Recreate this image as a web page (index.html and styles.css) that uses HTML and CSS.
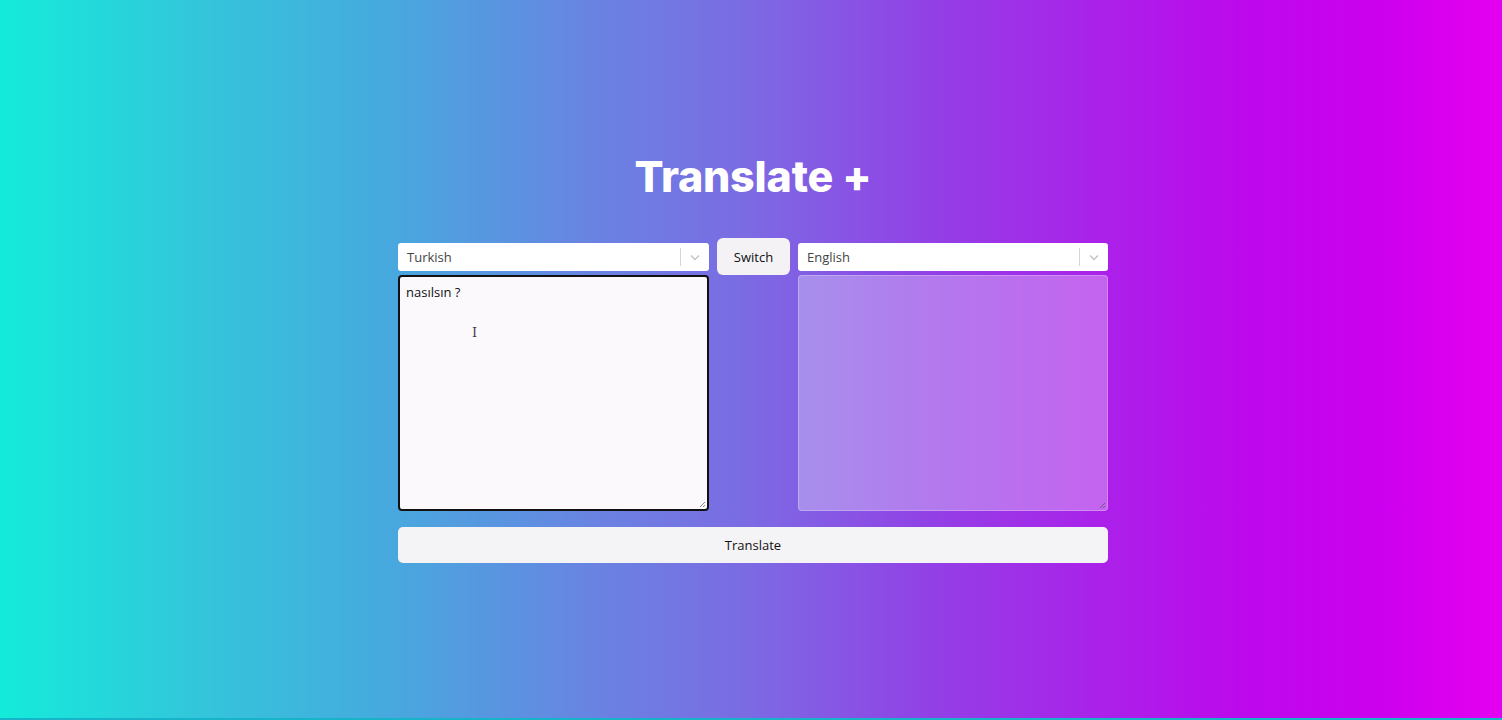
FILE: index.html
```html
<!DOCTYPE html>
<html lang="en">
<head>
<meta charset="utf-8">
<title>Translate +</title>
<link rel="stylesheet" href="styles.css">
</head>
<body>
<main class="page">
  <h1 class="title">Translate +</h1>
  <section class="translator">
    <div class="row">
      <div class="col">
        <div class="select">
          <span class="select-value">Turkish</span>
          <span class="select-sep"></span>
          <svg class="chev" width="20" height="20" viewBox="0 0 20 20"><path d="M6 8.5l4 4 4-4" fill="none" stroke="#c4c4c4" stroke-width="1.4"/></svg>
        </div>
        <div class="area area-focus">
          <span class="area-text">nasılsın ?</span>
          <span class="caret">I</span>
          <svg class="grip" width="8" height="8" viewBox="0 0 8 8"><path d="M7 2L2 7M7 5L5 7" stroke="#888" stroke-width="1"/></svg>
        </div>
      </div>
      <button class="switch">Switch</button>
      <div class="col">
        <div class="select">
          <span class="select-value">English</span>
          <span class="select-sep"></span>
          <svg class="chev" width="20" height="20" viewBox="0 0 20 20"><path d="M6 8.5l4 4 4-4" fill="none" stroke="#c4c4c4" stroke-width="1.4"/></svg>
        </div>
        <div class="area area-out">
          <svg class="grip" width="8" height="8" viewBox="0 0 8 8"><path d="M7 2L2 7M7 5L5 7" stroke="#6b5a8a" stroke-width="1"/></svg>
        </div>
      </div>
    </div>
    <button class="translate">Translate</button>
  </section>
</main>
</body>
</html>
```
FILE: styles.css
```css
* { box-sizing: border-box; }
html, body { margin: 0; height: 100%; }
body {
  font-family: "Open Sans", "Noto Sans", sans-serif;
  background: linear-gradient(90deg, #14ebda 0%, #33c6db 13%, #45abde 25%, #6a82e2 40%, #7c6ae3 50%, #9240e6 62%, #aa22e9 73%, #bd08ec 83%, #cc00ee 92%, #e500f0 100%);
  border-bottom: 2px solid #17b4c9;
  overflow: hidden;
}
.page {
  display: flex;
  flex-direction: column;
  align-items: center;
  padding-top: 149px;
  padding-left: 4px;
}
.title {
  margin: 0;
  color: #fff;
  font-family: "Inter", sans-serif;
  font-weight: 800;
  font-size: 43px;
  letter-spacing: -0.2px;
  line-height: 54px;
}
.translator {
  margin-top: 35px;
  width: 710px;
  display: flex;
  flex-direction: column;
  gap: 16px;
}
.row {
  display: flex;
  align-items: flex-start;
  gap: 8px;
}
.col {
  flex: 0 0 311px;
  display: flex;
  flex-direction: column;
  gap: 4px;
  padding-top: 5px;
}
.col:last-child { flex-basis: 310px; }
.select {
  height: 28px;
  background: #fff;
  border-radius: 3px;
  display: flex;
  align-items: center;
  padding-left: 9px;
  padding-right: 4px;
  font-size: 13px;
  color: #444;
}
.select-value { flex: 1; }
.select-sep {
  width: 1px;
  height: 18px;
  background: #d6d6d6;
  margin-right: 4px;
}
.chev { display: block; }
.area {
  height: 236px;
  border-radius: 4px;
  position: relative;
}
.area-focus {
  background: #fcf9fd;
  border: 2px solid #111;
  padding: 6px 6px;
  font-size: 13px;
  color: #111;
}
.area-out {
  background: rgba(255, 255, 255, 0.3);
  border: 1px solid rgba(255, 255, 255, 0.25);
}
.caret {
  position: absolute;
  left: 72px;
  top: 48px;
  font-family: "DejaVu Serif", serif;
  font-size: 13px;
  color: #444;
}
.grip { position: absolute; right: 1px; bottom: 1px; }
.switch {
  flex: 0 0 73px;
  height: 37px;
  margin-top: 0;
  border: none;
  border-radius: 6px;
  background: #f4f2f5;
  font-family: "Open Sans", sans-serif;
  font-size: 13px;
  font-weight: 500;
  color: #111;
}
.translate {
  height: 36px;
  border: none;
  border-radius: 5px;
  background: #f4f3f5;
  font-family: "Open Sans", sans-serif;
  font-size: 13px;
  font-weight: 500;
  color: #111;
}
```
